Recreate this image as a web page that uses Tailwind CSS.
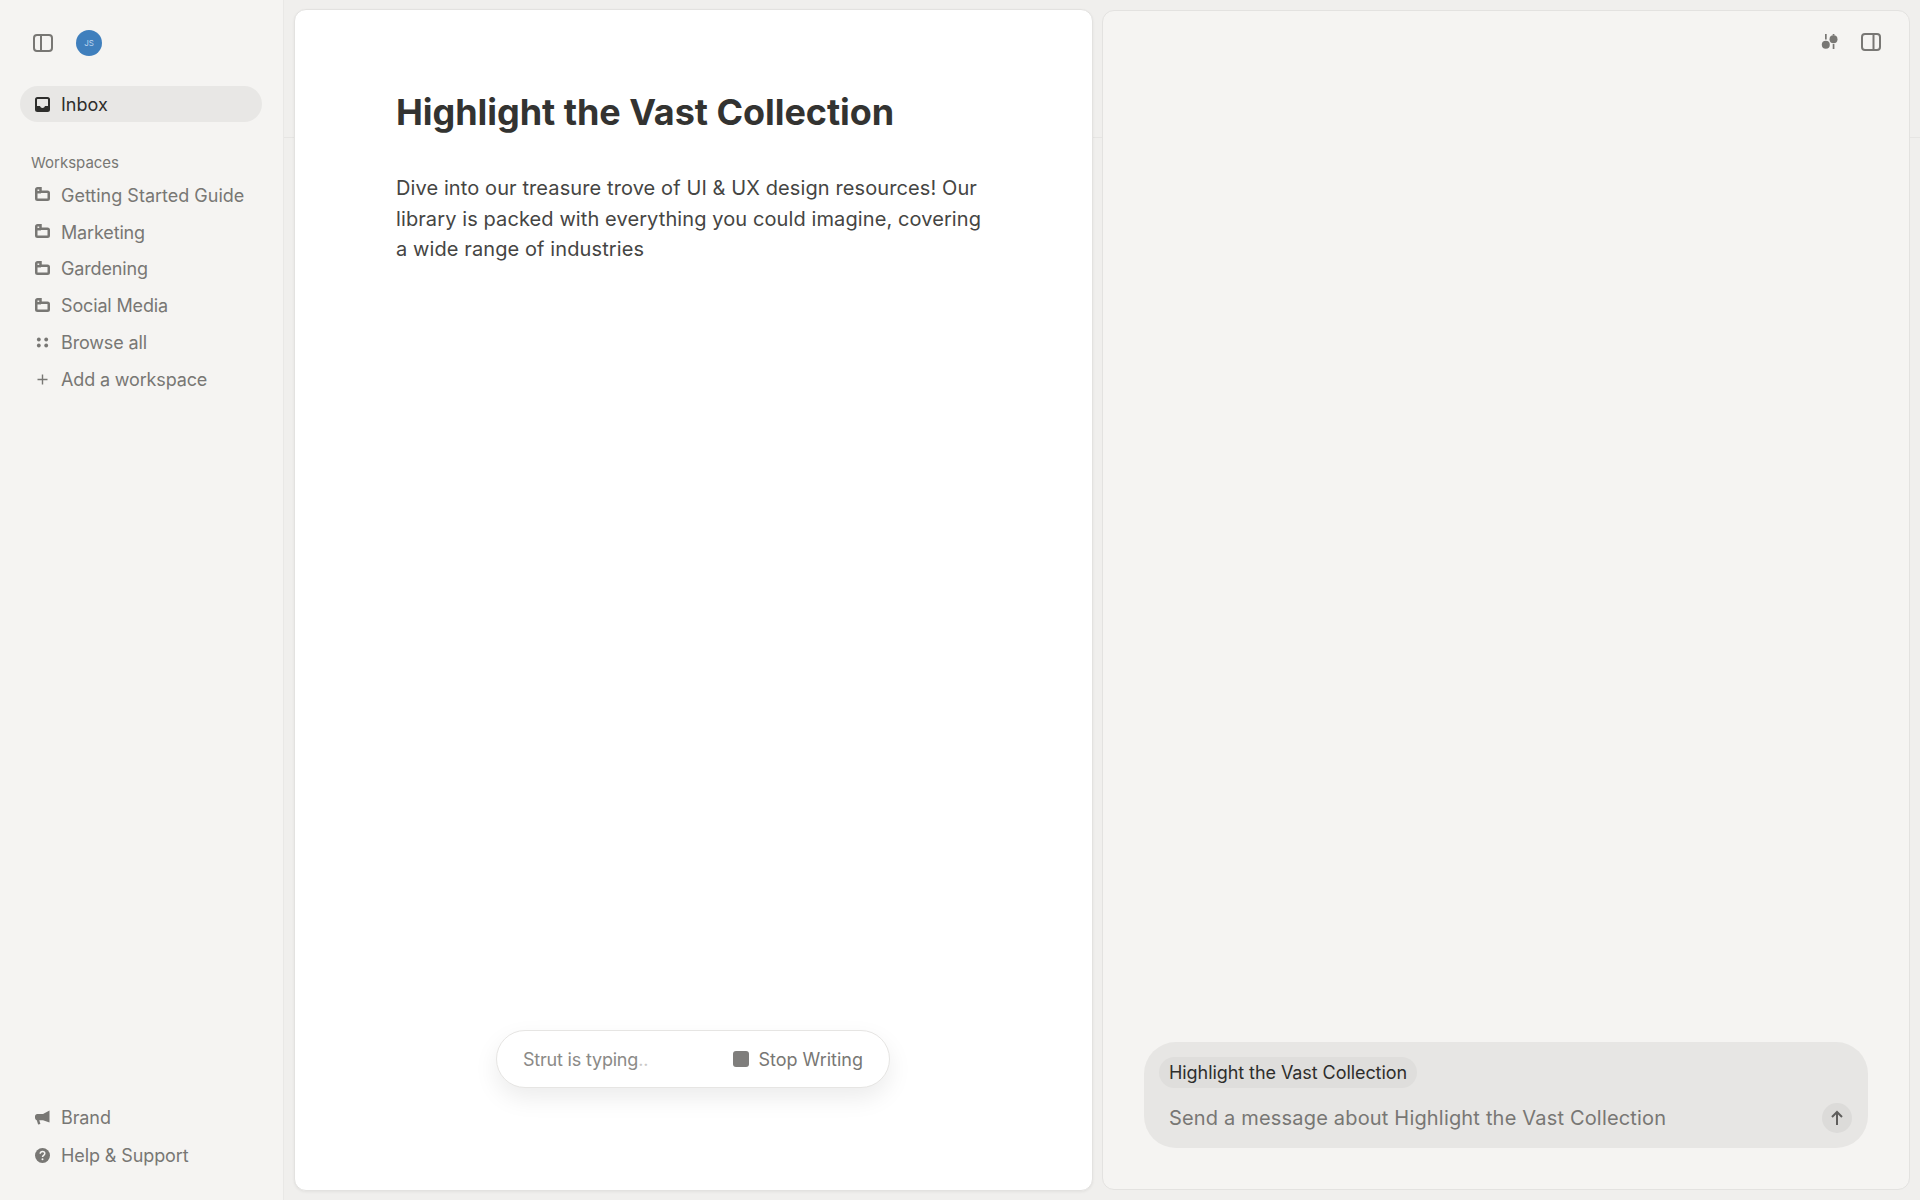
<!DOCTYPE html>
<html lang="en">
<head>
  <meta charset="UTF-8" />
  <title>Strut</title>
  <script src="https://cdn.jsdelivr.net/npm/@tailwindcss/browser@4"></script>
</head>
<body class="bg-[#f5f4f2] text-[#787774] font-['Inter',sans-serif] h-[1200px] w-[1920px] overflow-hidden flex">

  <!-- Sidebar -->
  <aside class="w-[284px] h-full shrink-0 flex flex-col justify-between border-r border-[#e9e8e6] shadow-[4px_0_12px_rgba(0,0,0,0.02)] pl-5 pr-[21px] pb-[26px]">
    <div>
      <div class="h-[86px] flex items-center pl-[13px] gap-[23px]">
        <svg class="w-5 h-[18px]" viewBox="0 0 20 18" fill="none" stroke="#787774" stroke-width="2"><rect x="1" y="1" width="18" height="16" rx="3"/><path d="M8 1v16"/></svg>
        <div class="w-[26px] h-[26px] rounded-full bg-[#3f7fbd] text-[#bcd6f0] text-[8px] flex items-center justify-center">JS</div>
      </div>
      <a class="h-[36px] rounded-full bg-[#e8e7e5] flex items-center pl-[15px] gap-[11px] text-[18px] text-[#2e2e2c]">
        <svg class="w-[15px] h-[15px]" viewBox="0 0 15 15"><path fill="#2e2e2c" fill-rule="evenodd" d="M2.5 0h10A2.5 2.5 0 0 1 15 2.500v10a2.500 2.500 0 0 1-2.500 2.500h-10A2.500 2.500 0 0 1 0 12.500v-10A2.500 2.500 0 0 1 2.500 0ZM2 2.500V9h3c.4 1.300 1.300 2 2.500 2s2.100-.7 2.500-2h3V2.500a.5.5 0 0 0-.5-.5h-10a.5.5 0 0 0-.5.5Z"/></svg>
        Inbox
      </a>
      <div class="text-[15px] leading-[18px] mt-[32px] pl-[11px] mb-[5px]">Workspaces</div>
      <nav class="flex flex-col text-[18px]">
        <a class="h-[36.800px] flex items-center pl-[15px] gap-[11px]">
          <svg class="w-[15px] h-[14px] -mt-[2px]" viewBox="0 0 15 14" fill="none" stroke="#787774" stroke-width="2.500"><path d="M1.250 2.500A1.250 1.250 0 0 1 2.500 1.250H5.500V4.700H12.500A1.250 1.250 0 0 1 13.750 5.950V11.500A1.250 1.250 0 0 1 12.500 12.750H2.500A1.250 1.250 0 0 1 1.250 11.500Z"/><path d="M1 5.200h5"/></svg>
          Getting Started Guide
        </a>
        <a class="h-[36.800px] flex items-center pl-[15px] gap-[11px] tracking-[-0.15px]">
          <svg class="w-[15px] h-[14px] -mt-[2px]" viewBox="0 0 15 14" fill="none" stroke="#787774" stroke-width="2.500"><path d="M1.250 2.500A1.250 1.250 0 0 1 2.500 1.250H5.500V4.700H12.500A1.250 1.250 0 0 1 13.750 5.950V11.500A1.250 1.250 0 0 1 12.500 12.750H2.500A1.250 1.250 0 0 1 1.250 11.500Z"/><path d="M1 5.200h5"/></svg>
          Marketing
        </a>
        <a class="h-[36.800px] flex items-center pl-[15px] gap-[11px] tracking-[-0.15px]">
          <svg class="w-[15px] h-[14px] -mt-[2px]" viewBox="0 0 15 14" fill="none" stroke="#787774" stroke-width="2.500"><path d="M1.250 2.500A1.250 1.250 0 0 1 2.500 1.250H5.500V4.700H12.500A1.250 1.250 0 0 1 13.750 5.950V11.500A1.250 1.250 0 0 1 12.500 12.750H2.500A1.250 1.250 0 0 1 1.250 11.500Z"/><path d="M1 5.200h5"/></svg>
          Gardening
        </a>
        <a class="h-[36.800px] flex items-center pl-[15px] gap-[11px] tracking-[-0.15px]">
          <svg class="w-[15px] h-[14px] -mt-[2px]" viewBox="0 0 15 14" fill="none" stroke="#787774" stroke-width="2.500"><path d="M1.250 2.500A1.250 1.250 0 0 1 2.500 1.250H5.500V4.700H12.500A1.250 1.250 0 0 1 13.750 5.950V11.500A1.250 1.250 0 0 1 12.500 12.750H2.500A1.250 1.250 0 0 1 1.250 11.500Z"/><path d="M1 5.200h5"/></svg>
          Social Media
        </a>
        <a class="h-[36.800px] flex items-center pl-[15px] gap-[11px] tracking-[-0.15px]">
          <svg class="w-[15px] h-[15px]" viewBox="0 0 15 15" fill="#787774"><circle cx="3.800" cy="4.500" r="1.900"/><circle cx="11.200" cy="4.500" r="1.900"/><circle cx="3.800" cy="10.500" r="1.900"/><circle cx="11.200" cy="10.500" r="1.900"/></svg>
          Browse all
        </a>
        <a class="h-[36.800px] flex items-center pl-[15px] gap-[11px] tracking-[-0.15px]">
          <svg class="w-[15px] h-[15px]" viewBox="0 0 15 15" fill="none" stroke="#787774" stroke-width="1.400"><path d="M7.500 2.500v10M2.500 7.500h10"/></svg>
          Add a workspace
        </a>
      </nav>
    </div>
    <div class="flex flex-col text-[18px] gap-[1px] tracking-[-0.1px]">
      <a class="h-[37px] flex items-center pl-[15px] gap-[11px]">
        <svg class="w-[15px] h-[15px]" viewBox="0 0 15 15" fill="#787774"><path d="M14.500.5v12L8 10.300H4.300L5.400 14l-2.300.6L1.800 10.300C.7 10 0 9 0 7.800V6.300C0 5 1 4 2.300 4H8Z"/></svg>
        Brand
      </a>
      <a class="h-[37px] flex items-center pl-[15px] gap-[11px]">
        <svg class="w-[15px] h-[15px]" viewBox="0 0 15 15"><circle cx="7.500" cy="7.500" r="7.500" fill="#787774"/><path d="M5.200 5.800c0-1.400 1-2.200 2.300-2.200s2.300.8 2.300 2c0 1.900-2.300 1.700-2.300 3.500" fill="none" stroke="#f5f4f2" stroke-width="1.500"/><circle cx="7.500" cy="11.300" r="1" fill="#f5f4f2"/></svg>
        Help &amp; Support
      </a>
    </div>
  </aside>

  <main class="relative flex-1 flex gap-[9px] pl-[10px] pr-[10px] pt-[9px] pb-[9px] bg-[#f0efed]">
    <!-- faint header rule behind the panels -->
    <div class="absolute inset-x-0 top-[137px] h-px bg-[#e6e5e3]"></div>

    <!-- Document -->
    <section class="relative w-[799px] shrink-0 bg-white rounded-[12px] border border-[#e3e2e0] shadow-[0_1px_3px_rgba(0,0,0,0.06)] pl-[101px] pr-[110px] pt-[77px]">
      <h1 class="text-[36px] leading-[50px] font-bold text-[#333331] tracking-[-0.05px]">Highlight the Vast Collection</h1>
      <p class="text-[20px] leading-[30.600px] text-[#454543] mt-[36px] tracking-[0.1px]">Dive into our treasure trove of UI &amp; UX design resources! Our library is packed with everything you could imagine, covering a wide range of industries</p>

      <!-- floating typing status -->
      <div class="absolute left-[201px] top-[1020px] w-[394px] h-[58px] rounded-full bg-white border border-[#e6e5e3] shadow-[0_10px_24px_rgba(0,0,0,0.08)] flex items-center justify-between pl-[26px] pr-[26px] text-[18px]">
        <span class="text-[#8b8a87] tracking-[-0.2px]">Strut is typing<span class="text-[#c9c8c6]">..</span></span>
        <span class="flex items-center gap-[9px]">
          <span class="w-4 h-4 rounded-[3px] bg-[#7f7e7c]"></span>
          Stop Writing
        </span>
      </div>
    </section>

    <!-- Chat -->
    <section class="relative flex-1 my-[1px] bg-[#f5f4f2] rounded-[12px] border border-[#e3e2e0] flex flex-col justify-between pl-[41px] pr-[41px] pt-[22px] pb-[41px]">
      <div class="flex justify-end items-center gap-[22px] -mr-[13px]">
        <svg class="w-[18px] h-[18px]" viewBox="0 0 18 18" fill="#787774"><path d="M4 1h1.700v5.500H4ZM11.700 1h1.700v1.500h-1.700ZM11.700 11h1.700v5h-1.700Z"/><circle cx="4.800" cy="11.800" r="4"/><circle cx="12.500" cy="6.300" r="4"/></svg>
        <svg class="w-5 h-[18px]" viewBox="0 0 20 18" fill="none" stroke="#787774" stroke-width="2"><rect x="1" y="1" width="18" height="16" rx="3"/><path d="M12.500 1v16"/></svg>
      </div>
      <div class="h-[106px] rounded-[32px] bg-[#e7e6e4] pl-[15px] pr-[16px] pt-[15px]">
        <span class="inline-flex items-center h-[31px] px-[10px] rounded-full bg-[#dfdedc] text-[18px] text-[#2e2e2c] tracking-[-0.07px]">Highlight the Vast Collection</span>
        <div class="flex items-center justify-between pl-[10px] mt-[15px]">
          <span class="text-[20px] text-[#787774] tracking-[0.18px]">Send a message about Highlight the Vast Collection</span>
          <span class="w-[30px] h-[30px] rounded-full bg-[#dcdbd9] flex items-center justify-center">
            <svg class="w-4 h-4" viewBox="0 0 16 16" fill="none" stroke="#5f5e5c" stroke-width="2"><path d="M8 15V2M3 7l5-5 5 5"/></svg>
          </span>
        </div>
      </div>
    </section>
  </main>
</body>
</html>
